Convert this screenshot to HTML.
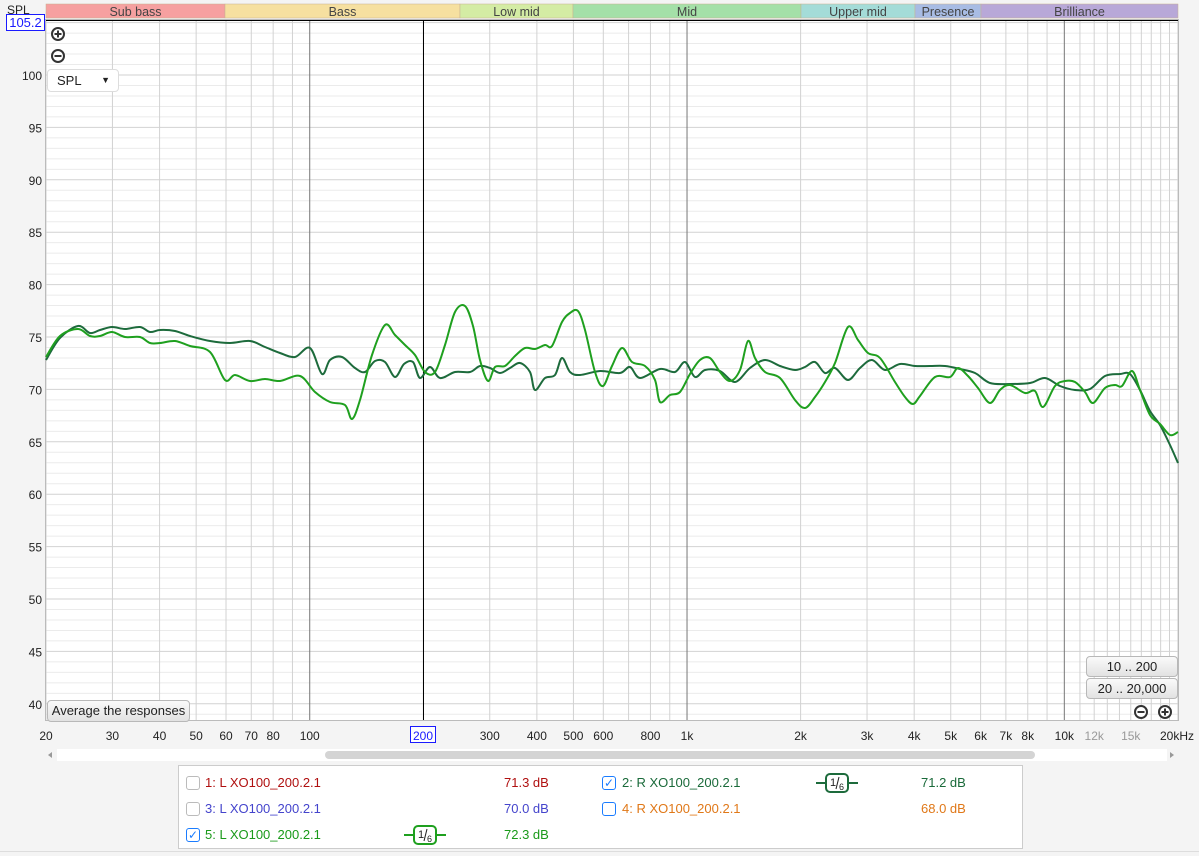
<!DOCTYPE html>
<html><head><meta charset="utf-8"><style>
body{margin:0;width:1199px;height:856px;background:#f4f4f4;font-family:"Liberation Sans",sans-serif;overflow:hidden;position:relative}
.abs{position:absolute}
.btn{position:absolute;background:linear-gradient(#fafafa,#e2e2e2);border:1px solid #b8b8b8;border-radius:4px;font-size:13px;color:#222;text-align:center}
.leg{position:absolute;font-size:13px}
.cb{position:absolute;width:12px;height:12px;border:1px solid #bbb;border-radius:3px;background:#fff}
</style></head><body>
<svg id="s" class="abs" style="left:0;top:0" width="1199" height="856" font-family="Liberation Sans, sans-serif"></svg>
<div class="abs" style="left:7px;top:3px;font-size:12px;color:#222">SPL</div>
<div class="abs" style="left:6px;top:14px;width:37px;height:15px;border:1px solid #1a1aff;background:#fff;color:#1a1aff;font-size:13px;text-align:center;line-height:15px">105.2</div>
<div class="btn" style="left:47px;top:69px;width:70px;height:21px;line-height:21px;text-align:left;background:#fff;border-color:#ddd"><span style="margin-left:9px">SPL</span><span style="position:absolute;right:8px;top:0;font-size:9px">▼</span></div>
<div class="btn" style="left:47px;top:700px;width:141px;height:20px;line-height:20px">Average the responses</div>
<div class="btn" style="left:1086px;top:656px;width:90px;height:19px;line-height:19px">10 .. 200</div>
<div class="btn" style="left:1086px;top:678px;width:90px;height:19px;line-height:19px">20 .. 20,000</div>
<div class="cb" style="left:186px;top:776px"></div>
<div class="leg" style="left:205px;top:775px;color:#b01010">1: L XO100_200.2.1</div>
<div class="leg" style="left:504px;top:775px;color:#b01010">71.3 dB</div>
<div class="cb" style="left:186px;top:802px"></div>
<div class="leg" style="left:205px;top:801px;color:#4444cc">3: L XO100_200.2.1</div>
<div class="leg" style="left:504px;top:801px;color:#4444cc">70.0 dB</div>
<div class="cb" style="left:186px;top:828px;border-color:#1a7cff;color:#1a7cff;font-size:12px;line-height:12px;text-align:center">✓</div>
<div class="leg" style="left:205px;top:827px;color:#1a9a1a">5: L XO100_200.2.1</div>
<div class="leg" style="left:504px;top:827px;color:#1a9a1a">72.3 dB</div>
<div class="cb" style="left:602px;top:776px;border-color:#1a7cff;color:#1a7cff;font-size:12px;line-height:12px;text-align:center">✓</div>
<div class="leg" style="left:622px;top:775px;color:#1a6a3a">2: R XO100_200.2.1</div>
<div class="leg" style="left:921px;top:775px;color:#1a6a3a">71.2 dB</div>
<div class="cb" style="left:602px;top:802px;border-color:#1a7cff"></div>
<div class="leg" style="left:622px;top:801px;color:#e07818">4: R XO100_200.2.1</div>
<div class="leg" style="left:921px;top:801px;color:#e07818">68.0 dB</div>
<script>
const s=document.getElementById('s');let h='';
const X=f=>46+377.3*Math.log10(f/20),Y=d=>75+(100-d)*10.48;
h+='<rect x="46" y="20" width="1132" height="700" fill="#fff"/>';
for(let d=39;d<=105;d++){const y=Y(d);h+=`<line x1="46" x2="1178" y1="${y}" y2="${y}" stroke="${d%5?'#ebebeb':'#d2d2d2'}"/>`;}
const fs=[];for(let dec of[10,100,1000,10000])for(let m=1;m<10;m++){let f=dec*m;if(f>=20&&f<=20000)fs.push(f);}
[11000,12000,13000,14000,16000,17000,18000,19000,15000].forEach(f=>fs.push(f));
fs.forEach(f=>{const x=X(f);let c=(f==100||f==1000||f==10000)?'#777':'#d2d2d2';h+=`<line x1="${x}" x2="${x}" y1="20" y2="720" stroke="${c}"/>`;});
h+=`<line x1="423.5" x2="423.5" y1="20" y2="720" stroke="#000"/>`;
h+='<line x1="46" x2="1178" y1="20.5" y2="20.5" stroke="#000"/><rect x="45.5" y="19.5" width="1133" height="701" fill="none" stroke="#bbb"/>';
const bands=[[46,225,'#f6a0a0','Sub bass'],[225,460,'#f6e0a0','Bass'],[460,573,'#d4eca4','Low mid'],[573,801,'#a4e0a8','Mid'],[801,915,'#a4dcd8','Upper mid'],[915,981,'#a8bce4','Presence'],[981,1178,'#b8a8d8','Brilliance']];
bands.forEach(b=>{h+=`<rect x="${b[0]}" y="4" width="${b[1]-b[0]}" height="14" fill="${b[2]}" stroke="#c8b090" stroke-width="0.5"/><text x="${(b[0]+b[1])/2}" y="16" font-size="12.5" fill="#444" text-anchor="middle">${b[3]}</text>`;});
for(let d=40;d<=100;d+=5)h+=`<text x="42" y="${Y(d)+5}" font-size="12" fill="#222" text-anchor="end">${d}</text>`;
const lab=[[20,'20'],[30,'30'],[40,'40'],[50,'50'],[60,'60'],[70,'70'],[80,'80'],[100,'100'],[300,'300'],[400,'400'],[500,'500'],[600,'600'],[800,'800'],[1000,'1k'],[2000,'2k'],[3000,'3k'],[4000,'4k'],[5000,'5k'],[6000,'6k'],[7000,'7k'],[8000,'8k'],[10000,'10k']];
lab.forEach(l=>h+=`<text x="${X(l[0])}" y="740" font-size="12" fill="#222" text-anchor="middle">${l[1]}</text>`);
h+=`<text x="${X(12000)}" y="740" font-size="12" fill="#999" text-anchor="middle">12k</text><text x="${X(15000)}" y="740" font-size="12" fill="#999" text-anchor="middle">15k</text><text x="1160" y="740" font-size="12" fill="#222">20kHz</text>`;
h+='<rect x="410.5" y="726.5" width="25" height="16" fill="#fff" stroke="#1a1aff"/><text x="423" y="740" font-size="12" fill="#1a1aff" text-anchor="middle">200</text>';
h+='<rect x="57" y="749" width="1110" height="12" fill="#fff"/><rect x="325" y="751" width="710" height="8" rx="4" fill="#d4d4d4"/><path d="M52 752 L48 755 L52 758Z" fill="#999"/><path d="M1170 752 L1174 755 L1170 758Z" fill="#999"/>';
h+='<rect x="178.5" y="765.5" width="844" height="83" fill="#fff" stroke="#ccc"/>';
const circ=(x,y,p)=>`<circle cx="${x}" cy="${y}" r="6" fill="#fff" stroke="#333" stroke-width="2"/><line x1="${x-3.5}" x2="${x+3.5}" y1="${y}" y2="${y}" stroke="#333" stroke-width="2"/>`+(p?`<line x1="${x}" x2="${x}" y1="${y-3.5}" y2="${y+3.5}" stroke="#333" stroke-width="2"/>`:'');
h+=circ(58,34,1)+circ(58,56,0)+circ(1141,712,0)+circ(1165,712,1);
const R="46,360 60,338 78,326 90,333 100,330 112,327 125,329 140,327 150,332 160,330 175,331 190,336 210,341 230,343 250,341 265,347 280,353 295,357 310,348 322,374 330,360 342,357 355,368 365,372 375,361 385,362 395,377 404,364 413,362 420,378 430,367 440,378 455,372 470,372 480,366 490,368 500,373 510,368 520,363 530,372 535,390 545,378 555,375 562,358 570,372 580,375 600,371 620,373 630,367 640,378 660,369 675,372 685,362 695,377 705,370 720,371 735,382 750,368 765,360 780,366 795,370 805,367 815,362 825,373 835,368 848,380 860,368 872,360 885,370 900,364 915,366 930,366 945,366 960,369 975,373 990,383 1010,384 1030,383 1045,378 1060,386 1075,390 1090,389 1105,376 1120,374 1130,374 1140,390 1150,411 1160,425 1170,445 1178,463";
const L="46,357 60,336 78,329 90,336 100,336 112,332 125,337 140,337 150,343 160,343 175,341 190,346 210,352 225,380 235,375 250,381 265,379 280,381 300,376 315,392 330,402 345,405 352,419 360,400 372,355 385,325 395,335 405,345 415,355 425,372 435,372 445,345 455,312 465,306 473,326 480,360 488,381 495,367 505,366 515,356 525,348 535,349 545,345 552,346 562,322 570,313 578,311 585,330 595,372 603,386 612,366 622,348 632,362 645,366 655,380 660,402 670,395 680,392 690,374 700,360 710,358 720,372 730,381 740,370 748,341 755,358 765,372 780,378 795,400 805,408 815,397 825,382 835,363 848,327 858,340 868,353 880,358 895,382 905,397 913,404 920,396 935,377 950,377 958,368 968,376 978,388 990,403 1000,390 1010,385 1025,393 1035,391 1043,407 1055,386 1065,381 1075,382 1085,392 1093,403 1105,388 1115,385 1122,386 1132,371 1140,390 1150,415 1160,424 1170,435 1178,432";
const smooth=str=>{const p=str.split(' ').map(q=>q.split(',').map(Number));let d=`M${p[0][0]},${p[0][1]}`;for(let i=0;i<p.length-1;i++){const a=p[i-1]||p[i],b=p[i],c=p[i+1],e=p[i+2]||c;d+=` C${b[0]+(c[0]-a[0])/6},${b[1]+(c[1]-a[1])/6} ${c[0]-(e[0]-b[0])/6},${c[1]-(e[1]-b[1])/6} ${c[0]},${c[1]}`;}return d;};
h+=`<path d="${smooth(R)}" fill="none" stroke="#1d6b3c" stroke-width="2"/><path d="${smooth(L)}" fill="none" stroke="#1fa01f" stroke-width="2"/>`;
const sm=(x,y,c)=>`<line x1="${x-10}" x2="${x+32}" y1="${y}" y2="${y}" stroke="${c}" stroke-width="2"/><rect x="${x}" y="${y-9}" width="22" height="18" rx="4" fill="#fff" stroke="${c}" stroke-width="2"/><text x="${x+4}" y="${y+3}" font-size="11" fill="#222">1</text><line x1="${x+13}" x2="${x+10}" y1="${y-6}" y2="${y+6}" stroke="#222"/><text x="${x+13}" y="${y+7}" font-size="9" fill="#222">6</text>`;
h+=sm(414,835,'#1fa01f')+sm(826,783,'#1d6b3c');
h+='<line x1="0" x2="1199" y1="851.5" y2="851.5" stroke="#ddd"/>';
s.innerHTML=h;
</script>
</body></html>
